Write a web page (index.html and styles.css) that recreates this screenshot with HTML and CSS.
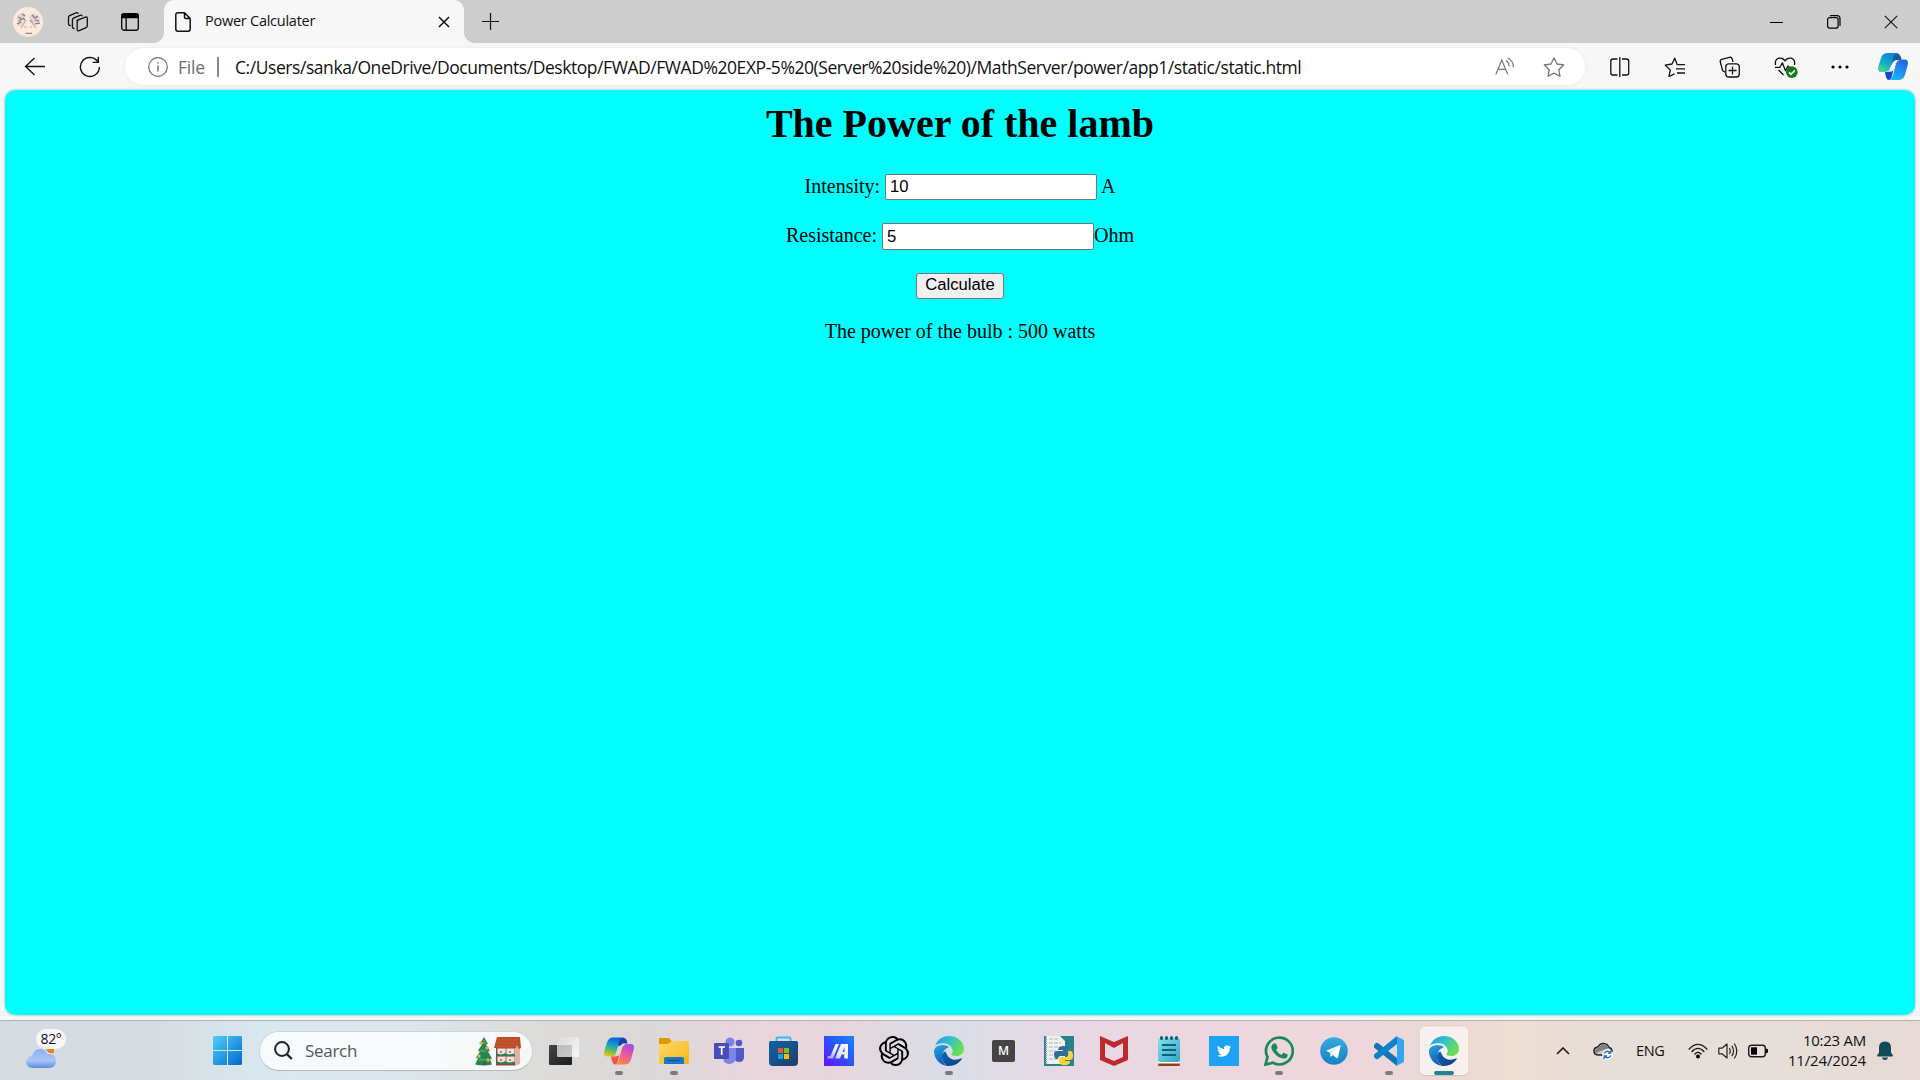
FILE: index.html
```html
<!DOCTYPE html>
<html lang="en">
<head>
<meta charset="utf-8">
<title>Power Calculater</title>
<link rel="stylesheet" href="styles.css">
</head>
<body>
<svg class="defs" width="0" height="0" aria-hidden="true">
  <defs>
    <linearGradient id="edge-low" x1="0" y1="0" x2="1" y2="1"><stop offset="0" stop-color="#1068b8"/><stop offset="1" stop-color="#0d3f86"/></linearGradient>
    <linearGradient id="edge-mid" x1="0" y1="0" x2=".4" y2="1"><stop offset="0" stop-color="#2aa6e4"/><stop offset="1" stop-color="#0c5cba"/></linearGradient>
    <linearGradient id="edge-top" x1="0" y1="0" x2="1" y2=".5"><stop offset="0" stop-color="#2496dc"/><stop offset=".5" stop-color="#2fc3cf"/><stop offset="1" stop-color="#6be04a"/></linearGradient>
    <linearGradient id="win" gradientUnits="userSpaceOnUse" x1="0" y1="0" x2="29" y2="29"><stop offset="0" stop-color="#4fd0fb"/><stop offset="1" stop-color="#0069cc"/></linearGradient>
    <linearGradient id="cp-a" x1=".5" y1="0" x2=".2" y2="1"><stop offset="0" stop-color="#0b63d2"/><stop offset=".4" stop-color="#1a9cd0"/><stop offset=".7" stop-color="#6ac24e"/><stop offset="1" stop-color="#f2c413"/></linearGradient>
    <linearGradient id="cp-b" x1=".8" y1="0" x2=".3" y2="1"><stop offset="0" stop-color="#a14bea"/><stop offset=".5" stop-color="#f0589a"/><stop offset="1" stop-color="#fb8a3c"/></linearGradient>
    <linearGradient id="bc-a" x1=".7" y1="0" x2=".2" y2="1"><stop offset="0" stop-color="#0f83cf"/><stop offset=".5" stop-color="#10a5cf"/><stop offset="1" stop-color="#4ed88a"/></linearGradient>
    <linearGradient id="bc-b" x1=".8" y1="0" x2=".3" y2="1"><stop offset="0" stop-color="#2464dc"/><stop offset="1" stop-color="#18b7fb"/></linearGradient>
    <linearGradient id="cloud" x1="0" y1="0" x2="0" y2="1"><stop offset="0" stop-color="#86aef0"/><stop offset=".6" stop-color="#a9c6f8"/><stop offset="1" stop-color="#5f8ce0"/></linearGradient>
    <linearGradient id="folder" x1="0" y1="0" x2="1" y2="1"><stop offset="0" stop-color="#ffd965"/><stop offset="1" stop-color="#f8b714"/></linearGradient>
    <linearGradient id="store" x1="0" y1="0" x2="1" y2="1"><stop offset="0" stop-color="#0b66a9"/><stop offset="1" stop-color="#253a63"/></linearGradient>
    <linearGradient id="asus" x1="1" y1="0" x2="0" y2="1"><stop offset="0" stop-color="#1785ff"/><stop offset=".5" stop-color="#2b52fa"/><stop offset="1" stop-color="#6a12f2"/></linearGradient>
    <linearGradient id="asus-mark" x1="1" y1="0" x2="0" y2="1"><stop offset="0" stop-color="#fff"/><stop offset=".6" stop-color="#dfe6ff"/><stop offset="1" stop-color="#8f8bf8"/></linearGradient>
    <linearGradient id="pad" x1="0" y1="0" x2="1" y2="1"><stop offset="0" stop-color="#84dfee"/><stop offset="1" stop-color="#35a6c5"/></linearGradient>
    <linearGradient id="tele" x1="0" y1="0" x2="0" y2="1"><stop offset="0" stop-color="#37a9df"/><stop offset="1" stop-color="#1483c2"/></linearGradient>
    <linearGradient id="dark" x1="0" y1="0" x2="1" y2="1"><stop offset="0" stop-color="#454545"/><stop offset="1" stop-color="#1c1c1c"/></linearGradient>
    <linearGradient id="glass" x1="0" y1="0" x2="1" y2="1"><stop offset="0" stop-color="#dadada"/><stop offset="1" stop-color="#f6f6f6"/></linearGradient>
    <symbol id="edge" viewBox="0 0 24 24">
      <path fill="url(#edge-low)" d="M21.86 17.86q.14 0 .25.12.1.13.1.25t-.11.33l-.32.46-.43.53-.44.5q-.26.28-.38.38l-.22.23q-.58.53-1.34 1.04-.76.51-1.6.91-.86.4-1.74.64t-1.67.24q-.9 0-1.69-.28-.8-.28-1.48-.78-.68-.5-1.22-1.17-.53-.66-.92-1.44-.38-.77-.58-1.6-.2-.83-.2-1.67 0-1 .32-1.96.33-.97.87-1.8.14.95.55 1.77.41.82 1.02 1.5.6.68 1.38 1.21.78.54 1.64.9.86.36 1.77.56.92.2 1.8.2 1.12 0 2.18-.24 1.06-.23 2.06-.72l.2-.1z"/>
      <path fill="url(#edge-low)" d="M6.3 16.600Q6.500 21 10.300 23.900Q15 24.400 18.500 22L12 18L9.100 12.400Q6.400 13 6.300 16.600z"/>
      <path fill="url(#edge-mid)" d="M6.360 16.590q0 1.100.27 2.150.27 1.060.78 2.030.51.960 1.240 1.770.74.820 1.660 1.400-1.470-.2-2.800-.74-1.330-.55-2.480-1.370-1.150-.83-2.080-1.900-.92-1.070-1.580-2.330T.360 14.940Q0 13.540 0 12.060q0-.81.320-1.490.31-.68.830-1.230.53-.55 1.200-.96.66-.4 1.350-.66.740-.27 1.500-.39.780-.12 1.550-.12.7 0 1.420.1.720.12 1.400.35.680.23 1.320.57.630.35 1.160.83-.35 0-.7.070-.33.070-.65.230-.63.280-1.200.74-.57.460-1.050 1.040-.48.580-.87 1.260-.38.670-.65 1.390-.27.710-.42 1.440-.15.720-.15 1.360z"/>
      <path fill="url(#edge-top)" d="M11.960.060q1.700 0 3.330.39 1.630.38 3.070 1.150 1.430.77 2.620 1.930 1.180 1.160 1.980 2.700.49.940.76 1.960.28 1 .28 2.080 0 .89-.23 1.700-.24.800-.69 1.480-.45.680-1.100 1.220-.64.530-1.450.88-.54.240-1.110.36-.58.130-1.160.13-.42 0-.97-.03-.54-.03-1.100-.12-.55-.1-1.050-.28-.5-.19-.84-.5-.12-.09-.23-.24-.1-.16-.1-.33 0-.15.160-.35.160-.2.350-.5.200-.28.360-.68.160-.4.160-.95 0-1.060-.4-1.960-.4-.91-1.060-1.640-.66-.74-1.520-1.280-.86-.55-1.790-.89-.84-.3-1.720-.44-.87-.14-1.760-.14-1.550 0-3.060.45T.940 7.550q.71-1.740 1.810-3.130 1.100-1.380 2.520-2.350Q6.680 1.100 8.370.580q1.700-.52 3.590-.52z"/>
    </symbol>
  </defs>
</svg>

<header class="titlebar">
  <svg class="avatar" viewBox="0 0 30 30"><circle cx="15" cy="15" r="15" fill="#fae9dd"/><path d="M4 9l6-4 3 3-4 9-4 3zM26 9l-6-3-4 4 4 8 7-1z" fill="#ddd6d6"/><path d="M5 10l4 2-3 2m3-7l3 2M4 17l4-2m2-4l2 2M19 8l3 3 3-2M22 13l4 1m-4 3l5-1M17 13l2 2" fill="none" stroke="#80797f" stroke-width="1.100"/><path d="M13 13l-5 8m9-8l6 8M11 20h3m3 0h2" stroke="#d3a488" stroke-width="1.200" fill="none"/><path d="M12.500 26.300h6.500" stroke="#6d6060" stroke-width=".9"/></svg>
  <svg class="workspaces" width="22" height="22" viewBox="0 0 22 22"><g fill="none" stroke="#111" stroke-width="1.300" stroke-linejoin="round" stroke-linecap="round"><path d="M10 9.400l8.400-3.300q1.900-.6 1.900 1.100v7.600q0 1.300-1.200 1.800l-6.900 3q-2 .7-2-1.100v-7.600q0-1 .8-1.500z"/><path d="M7 17.500q-1.600 0-1.600-1.400V8.900q0-1.200 1.100-1.700l6.500-2.900q1.500-.6 2 .4M3.200 14.500q-1.700 0-1.700-1.500V6.400q0-1.200 1.100-1.700L9 1.900q1.500-.6 2 .4"/></g></svg>
  <svg class="tabmenu" width="18" height="18" viewBox="0 0 18 18"><rect x=".7" y=".9" width="16.600" height="16.400" rx="2.600" fill="none" stroke="#111" stroke-width="1.400"/><path d="M0 5.200V3q0-3 3-3h12q3 0 3 3v2.200zM4.500 5h1.300v12H4.500z" fill="#000"/></svg>
  <div class="tab">
    <svg width="16" height="20" viewBox="0 0 16 20"><path d="M2.800.8H9.500L15.200 6.500V17q0 2.200-2.100 2.200H2.900Q.8 19.200.8 17V3Q.8.800 2.800.8zM9.500.8V5q0 1.500 1.500 1.500h4.200" fill="none" stroke="#111" stroke-width="1.500" stroke-linejoin="round"/></svg>
    <span class="tab-title">Power Calculater</span>
    <svg width="12" height="12" viewBox="0 0 12 12"><path d="M1 1l10 10M11 1L1 11" stroke="#111" stroke-width="1.500"/></svg>
  </div>
  <svg class="newtab" width="18" height="18" viewBox="0 0 18 18"><path d="M8.500 0v17M0 8.500h17" stroke="#111" stroke-width="1.200"/></svg>
  <div class="window-buttons">
    <svg width="14" height="14" viewBox="0 0 14 14"><path d="M1 7.500h13" stroke="#000"/></svg>
    <svg width="14" height="14" viewBox="0 0 14 14"><rect x=".6" y="2.600" width="10.500" height="10.500" rx="2" fill="none" stroke="#000" stroke-width="1.200"/><path d="M3 .7h7q3 0 3 3V11" fill="none" stroke="#000" stroke-width="1.200"/></svg>
    <svg width="14" height="14" viewBox="0 0 14 14"><path d="M.8.8l12.400 12.400M13.200.8L.8 13.200" stroke="#111" stroke-width="1.100"/></svg>
  </div>
</header>

<nav class="toolbar">
  <svg class="back" width="22" height="20" viewBox="0 0 22 20"><path d="M21 9.500H1.500M10.500 1L1.500 9.500 10.500 18" fill="none" stroke="#111" stroke-width="1.300"/></svg>
  <svg class="reload" width="22" height="22" viewBox="0 0 22 22"><path d="M19 6A9.500 9.500 0 1 0 20.400 11M19.300.8V6.400H13.600" fill="none" stroke="#111" stroke-width="1.400"/></svg>
  <div class="address">
    <svg width="20" height="20" viewBox="0 0 20 20"><circle cx="10" cy="10" r="9.300" fill="none" stroke="#6e6e6e" stroke-width="1.200"/><path d="M10 8.500v6M10 5v1.600" stroke="#6e6e6e" stroke-width="1.400"/></svg>
    <span class="scheme">File</span>
    <span class="rule"></span>
    <span class="url">C:/Users/sanka/OneDrive/Documents/Desktop/FWAD/FWAD%20EXP-5%20(Server%20side%20)/MathServer/power/app1/static/static.html</span>
    <svg width="20" height="20" viewBox="0 0 20 20"><g fill="none" stroke="#777" stroke-width="1.200" stroke-linecap="round"><path d="M1 17L6.800 3 12.600 17M3 12.300h7.600M11.500 3.700Q14 5.500 14 9M13 1.200Q18.500 3.500 18.300 10"/></g></svg>
    <svg width="22" height="20" viewBox="0 0 22 20"><path d="M11 1l3 6 6.700 1-4.900 4.700 1.200 6.600-6-3.200-6 3.200 1.200-6.600L1.300 8 8 7z" fill="none" stroke="#777" stroke-width="1.300" stroke-linejoin="round"/></svg>
  </div>
  <div class="tools">
    <svg width="22" height="22" viewBox="0 0 22 22"><path d="M8.500 3H4Q1.800 3 1.800 5.200v11.600Q1.800 19 4 19h4.500M13 3h4.500q2.200 0 2.200 2.200v11.600Q19.700 19 17.500 19h-4.500M10.800 1v20" fill="none" stroke="#111" stroke-width="1.300"/></svg>
    <svg width="22" height="22" viewBox="0 0 22 22"><path d="M13 8L10.700 2.200 8 8 1.300 9.200l5 4.700L5 20.500l5.500-2.700M12.500 8.700h8.500M12 12.900h9M13 17h8" fill="none" stroke="#111" stroke-width="1.300" stroke-linejoin="round"/></svg>
    <svg width="22" height="22" viewBox="0 0 22 22"><path d="M6 16.200L3.600 14.500 1.300 6Q.8 4 2.700 3.300L10.500 1.300q2-.4 2.600 1.400L14 6" fill="none" stroke="#111" stroke-width="1.300"/><rect x="6.800" y="7.800" width="13.500" height="13.200" rx="3" fill="none" stroke="#111" stroke-width="1.300"/><path d="M13.500 10.500v8M9.500 14.500h8" stroke="#111" stroke-width="1.300"/></svg>
    <svg width="24" height="22" viewBox="0 0 24 22"><path d="M1.500 9Q.5 3.500 5 2.200 9 1.400 11 5 13 1.400 17 2.200 21.500 3.500 20.500 9M1 11.300h5l2.300-4.500 3.200 8L14 10l1.500 1.500H20M4.500 14l5 5" fill="none" stroke="#111" stroke-width="1.300" stroke-linejoin="round"/><circle cx="17.800" cy="16.200" r="5.800" fill="#0f7b12"/><path d="M15 16.400l2 2 3.800-4" fill="none" stroke="#fff" stroke-width="1.700"/></svg>
    <svg width="18" height="22" viewBox="0 0 18 22"><circle cx="2" cy="11" r="1.600"/><circle cx="9" cy="11" r="1.600"/><circle cx="16" cy="11" r="1.600"/></svg>
  </div>
  <svg class="copilot" width="30" height="27" viewBox="0 0 30 27"><path d="M18 0q4.500 0 5.500 6.500L19 8l-6 4V1z" fill="#155da0"/><path d="M10 0h10q-4 .5-5 5l-2.500 9q-1.200 4.500-5 5H3q-4-.5-2.600-6L3 5q1.500-5 7-5z" fill="url(#bc-a)"/><path d="M7 19h3l6-5-2 9q-1 4-3.500 4Q8 27 7 19z" fill="#1d45cb"/><path d="M20 27H10q4-.5 5-5l2.500-10q1.200-5 5-5.500H27q4 .5 2.600 6L27 22q-1.500 5-7 5z" fill="url(#bc-b)"/><path d="M13.800 11.500q1.300-4.500 5.700-4.500h2q-3 .5-4 4.500l-1.300 4.500q-1 3-6.200 3 2-.5 2.800-4z" fill="#f7f7f7"/></svg>
</nav>

<main class="page">
  <form class="calculator">
    <h1>The Power of the lamb</h1>
    <div class="field intensity">Intensity: <input type="text" value="10"> A</div>
    <div class="field resistance">Resistance: <input type="text" value="5">Ohm</div>
    <div class="field action"><input type="button" value="Calculate"></div>
    <div class="result">The power of the bulb : 500 watts</div>
  </form>
</main>

<footer class="taskbar">
  <div class="weather">
    <svg width="32" height="24" viewBox="0 0 32 24"><path d="M18 2h10v6h-5z" fill="#f37b20"/><path d="M6 23q-6-1-6-6 .5-5 6-6Q8 4 14 4q5 0 7.500 5 8-1 8.500 7 0 6-6 7z" fill="url(#cloud)"/></svg>
    <span class="temp">82°</span>
  </div>
  <svg class="start" width="29" height="29" viewBox="0 0 29 29"><path fill="url(#win)" d="M1 0h13v14H0V1zM15 0h13l1 1v13H15zM0 15h14v14H1l-1-1zM15 15h14v13l-1 1H15z"/></svg>
  <div class="search">
    <svg width="20" height="20" viewBox="0 0 20 20"><circle cx="8" cy="8" r="6.900" fill="none" stroke="#222" stroke-width="2"/><path d="M12.800 13l5 5" stroke="#222" stroke-width="2.400"/></svg>
    <span>Search</span>
    <svg class="holiday" width="46" height="30" viewBox="0 0 46 30"><path d="M9 1l4 7-2 .5 4 6.500-2 .5 4 7-2 1 2 5q-8 2-17 0l3-6-2-1 4-6-2-1 4-6-2-1z" fill="#268553"/><path d="M9 3l2 5H7zM7 13l6 3H4zM5 22l10 2-12 1z" fill="#3eaa65"/><path d="M8 26h3v3H8z" fill="#714932"/><g fill="#f1af2e"><circle cx="6" cy="7" r="1.700"/><circle cx="12" cy="12" r="1.700"/><circle cx="4" cy="20" r="1.700"/><circle cx="13" cy="24" r="1.700"/></g><path d="M21 11h20v18.500H21z" fill="#8a4a3c"/><path d="M40 11l5-3v20l-5 1.500z" fill="#dfb3a1"/><path d="M22 1h23l1 11-2 1-2-4-1 3H19z" fill="#b94d25"/><path d="M23 4h20M22 7h20M21 10h20" stroke="#d66b3d" stroke-width=".8" stroke-dasharray="2 1"/><path d="M23 13h7v5h-7zM32 13h7v5h-7zM23 21h7v5h-7zM32 21h7v5h-7z" fill="#dfe7ef" stroke="#f7dfda" stroke-width="1.200"/><path d="M22 18q4 3 8 0 5 3 9 0M22 26q4 3 8 0 5 3 9 0" fill="none" stroke="#228955" stroke-width="1.600"/><path d="M26 15v2m9-2v2m-9 6v2m9-2v2" stroke="#c44632" stroke-width="1.400"/></svg>
  </div>
  <div class="apps">
    <span class="app"><svg width="30" height="30" viewBox="0 0 30 30"><rect y="9" width="23" height="20" rx="1" fill="url(#dark)"/><rect x="8" y="1" width="22" height="20" rx="1" fill="url(#glass)"/><path d="M8 9h15v12H8z" fill="#777" opacity=".35"/></svg></span>
    <span class="app running"><svg width="30" height="28" viewBox="0 0 30 27"><path d="M18 0q5 0 5.500 6h-5l-3 4-3-5z" fill="#173fab"/><path d="M9 0h11q-4 .5-5 5l-2.500 9q-1.200 5-5 5H3q-4-.5-2.600-6L3 5q1.500-5 6-5z" fill="url(#cp-a)"/><path d="M7 19h3l6-5-2 9q-1 4-3.500 4Q8 26 7 19z" fill="#f25345"/><path d="M20 27H10q4-.5 5-5l2.500-10q1.200-5 5-5.500H27q4 .5 2.600 6L27 22q-1.500 5-7 5z" fill="url(#cp-b)"/><path d="M13.800 11.500q1.300-4.500 5.700-4.500h2q-3 .5-4 4.500l-1.300 4.500q-1 3-6.200 3 2-.5 2.800-4z" fill="#dcdad9"/></svg></span>
    <span class="app running"><svg width="30" height="30" viewBox="0 0 30 30"><path d="M0 10V3q0-1 1-1h8q1 0 2 1l2 3v4z" fill="#dd9a05"/><path d="M0 8h9l4-3h16q1 0 1 1v22H0z" fill="url(#folder)"/><path d="M5 28v-5q0-2 2-2h16q2 0 2 2v5z" fill="#1479c9"/><path d="M9 24.500h12" stroke="#0b529a" stroke-width="1.200"/></svg></span>
    <span class="app"><svg width="30" height="30" viewBox="0 0 30 30"><circle cx="16" cy="6" r="4.600" fill="#7b83eb"/><circle cx="25" cy="7" r="3.300" fill="#5059c9"/><path d="M21 12h9v9q0 5-5 5-3 0-4-2z" fill="#5059c9"/><path d="M9 12h13v9q0 7-7 7-6 0-6-7z" fill="#7b83eb"/><rect y="7" width="15" height="16" rx="1" fill="#474eb5"/><path d="M4.500 11h6.500M7.700 11v8" stroke="#fff" stroke-width="1.700"/></svg></span>
    <span class="app"><svg width="30" height="30" viewBox="0 0 30 30"><path d="M7.500 7V2.500Q7.500 1.500 8.500 1.500h12q1 0 1 1V7" fill="none" stroke="#2ebcef" stroke-width="1.800"/><path d="M0 6.500Q0 5 1.500 5h26q1.500 0 1.500 1.500V26q0 4-4 4h-21q-4 0-4-4z" fill="url(#store)"/><path d="M9 12h5v5H9z" fill="#f35325"/><path d="M15 12h5v5h-5z" fill="#81bc06"/><path d="M9 18h5v5H9z" fill="#05a6f0"/><path d="M15 18h5v5h-5z" fill="#ffba08"/></svg></span>
    <span class="app"><svg width="30" height="30" viewBox="0 0 30 30"><path d="M0 0h30v30H0z" fill="url(#asus)"/><path d="M3 22.500l1-2.500h2.500l5-12h3.500L9 22.500zM11 22.500l6-14.500h7v14.500h-3.500v-4h-3l-1.500 4zM20.500 11l-2 5h2z" fill="url(#asus-mark)" fill-rule="evenodd"/><circle cx="22" cy="20.500" r="1.800" fill="#fff"/></svg></span>
    <span class="app"><svg width="30" height="30" viewBox="0 0 24 24"><path d="M22.282 9.821a5.985 5.985 0 0 0-.516-4.910 6.046 6.046 0 0 0-6.510-2.900A6.065 6.065 0 0 0 4.981 4.182a5.985 5.985 0 0 0-3.998 2.900 6.046 6.046 0 0 0 .743 7.097 5.980 5.980 0 0 0 .511 4.911 6.051 6.051 0 0 0 6.515 2.900A5.985 5.985 0 0 0 13.260 24a6.056 6.056 0 0 0 5.772-4.206 5.989 5.989 0 0 0 3.998-2.900 6.056 6.056 0 0 0-.748-7.073zm-9.022 12.608a4.476 4.476 0 0 1-2.876-1.041l.142-.080 4.778-2.758a.795.795 0 0 0 .393-.681v-6.737l2.020 1.169a.071.071 0 0 1 .038.052v5.583a4.504 4.504 0 0 1-4.495 4.494zm-9.661-4.125a4.471 4.471 0 0 1-.535-3.014l.142.085 4.783 2.758a.771.771 0 0 0 .781 0l5.843-3.369v2.332a.080.080 0 0 1-.033.062L9.740 19.950a4.499 4.499 0 0 1-6.141-1.646zM2.341 7.896a4.485 4.485 0 0 1 2.366-1.973V11.600a.766.766 0 0 0 .388.677l5.814 3.354-2.020 1.169a.076.076 0 0 1-.071 0l-4.830-2.787A4.504 4.504 0 0 1 2.341 7.872zm16.596 3.856L13.104 8.364 15.119 7.200a.076.076 0 0 1 .071 0l4.830 2.791a4.494 4.494 0 0 1-.676 8.104v-5.677a.790.790 0 0 0-.407-.667zm2.011-3.023l-.142-.085-4.774-2.782a.776.776 0 0 0-.785 0L9.409 9.230V6.897a.066.066 0 0 1 .028-.062l4.830-2.787a4.499 4.499 0 0 1 6.680 4.660zM8.307 12.863l-2.020-1.164a.080.080 0 0 1-.038-.057V6.074a4.499 4.499 0 0 1 7.376-3.454l-.142.081L8.704 5.459a.795.795 0 0 0-.393.681zm1.097-2.365l2.602-1.500 2.607 1.500v2.999l-2.597 1.500-2.607-1.500z"/></svg></span>
    <span class="app running"><svg width="30" height="30"><use href="#edge"/></svg></span>
    <span class="app"><span class="m-tile">M</span></span>
    <span class="app"><svg width="30" height="30" viewBox="0 0 30 30"><path d="M0 0h30v30H0z" fill="#28818f"/><path d="M2 0h14l5 5v23H2z" fill="#eff1ef"/><path d="M5 3h10M5 7h12M5 11h9M5 15h7M5 19h7M5 23h8" stroke="#a9b5b5" stroke-dasharray="4 1"/><path d="M2 1v27" stroke="#7e9696" stroke-width="2" stroke-dasharray="1 1"/><path d="M15 11q5-2 8 0 1 1 1 3v3q0 3-3 3h-4q-3 0-3 3h-2q-2-1-2-5 0-3 3-3h6v-1h-5z" fill="#336d9e"/><path d="M24 15h3q2 1 2 5t-3 4h-5v1h5v2q-4 4-10 1-1-1-1-3v-2q0-2 3-2h4q3 0 2-6z" fill="#ffd340"/></svg></span>
    <span class="app"><svg width="28" height="30" viewBox="0 0 28 30"><path d="M0 0l14 6L28 0v24l-14 6L0 24zM5 7v14l9 4 9-4V7l-9 5z" fill="#bd292c" fill-rule="evenodd"/></svg></span>
    <span class="app"><svg width="24" height="30" viewBox="0 0 24 30"><path d="M1 26h22v2q0 2-1 2H2q-1 0-1-2z" fill="#93410f"/><rect x="1" y="24" width="22" height="3.500" fill="#fff"/><rect x="1" y="2" width="22" height="24" rx="2" fill="url(#pad)"/><path d="M5 9h14M5 14h14M5 19h14" stroke="#07637f" stroke-width="1.800"/><path d="M4.500 1.500v1M9.500 1.500v1M14.500 1.500v1M19.500 1.500v1" stroke="#155f7c" stroke-width="3" stroke-linecap="round"/></svg></span>
    <span class="app"><svg width="30" height="30" viewBox="0 0 30 30"><path d="M0 0h30v30H0z" fill="#1da1f2"/><path transform="translate(8 8) scale(.59)" fill="#fff" d="M23.953 4.570a10 10 0 01-2.825.775 4.958 4.958 0 002.163-2.723c-.951.555-2.005.959-3.127 1.184a4.920 4.920 0 00-8.384 4.482C7.690 8.095 4.067 6.130 1.640 3.162a4.822 4.822 0 00-.666 2.475c0 1.710.870 3.213 2.188 4.096a4.904 4.904 0 01-2.228-.616v.060a4.923 4.923 0 003.946 4.827 4.996 4.996 0 01-2.212.085 4.936 4.936 0 004.604 3.417 9.867 9.867 0 01-6.102 2.105c-.390 0-.779-.023-1.170-.067a13.995 13.995 0 007.557 2.209c9.053 0 13.998-7.496 13.998-13.985 0-.210 0-.420-.015-.630A9.935 9.935 0 0024 4.590z"/></svg></span>
    <span class="app running"><svg width="30" height="30" viewBox="0 0 30 30"><path d="M1.500 28.500l2-7.300A13.400 13.400 0 1 1 9 26.800z" fill="none" stroke="#188a5a" stroke-width="2.700"/><path d="M9.600 7.500h1.700q.7 0 1 .8l1.200 3q.2.600-.2 1.100l-1.200 1.500q2 3.700 5.500 5l1.600-1.800q.4-.5 1-.2l3 1.400q.7.400.5 1.100-.7 3.200-4.200 3.200-4.700-.5-8.300-4.300-3.800-3.900-3.900-7 .2-2.800 2.300-3.800z" fill="#188a5a"/></svg></span>
    <span class="app"><svg width="28" height="28" viewBox="0 0 28 28"><circle cx="14" cy="14" r="13.800" fill="url(#tele)"/><path d="M6 13.700L19.700 8.300q1-.3.800 1L18 20.500q-.4 1.200-1.500.5l-3.800-3-2 2-.9-4.500z" fill="#fff"/><path d="M10 15.500l7.500-5.200-6 6.300-.8 3.400z" fill="#c5deed"/></svg></span>
    <span class="app running"><svg width="30" height="30" viewBox="0 0 30 30"><path d="M0 9l2-2q1-.7 2 0l19 15v8L0 11.500z" fill="#1273b8"/><path d="M0 21l2 2q1 .7 2 0L23 8V0L0 18.500z" fill="#0e83cc"/><path d="M22 0l7 3.400q1 .5 1 1.600v20q0 1-1 1.600L22 30q1-.7 1-2V2q0-1.300-1-2z" fill="#33a5f2"/></svg></span>
    <span class="app running active"><svg width="30" height="30"><use href="#edge"/></svg></span>
  </div>
  <div class="tray">
    <svg class="chevron" width="14" height="8" viewBox="0 0 14 8"><path d="M1 7l6-6 6 6" fill="none" stroke="#1b1b1b" stroke-width="1.600"/></svg>
    <svg class="onedrive" width="20" height="18" viewBox="0 0 20 18"><path d="M5 13q-4-.2-4-4t4-4q2-4 6-3.500 3.500.3 5 4Q19 6 19 9.500L15 13z" fill="#ccc" stroke="#222" stroke-width="1.500"/><path d="M2 9q1-4 4-3.500Q8 1.500 11.500 2q3 .5 4 4L8 9q-3 0-5 3z" fill="#828282"/><circle cx="14.500" cy="12.500" r="5.300" fill="#fff"/><path d="M11 11.500q1.500-3 5-2l1.500 1.700m.3-3v3h-3M18 13.500q-1.500 3-5 2L11.500 14m-.3 3v-3h3" fill="none" stroke="#1b6fc0" stroke-width="1.300"/></svg>
    <span class="lang">ENG</span>
    <svg class="wifi" width="20" height="16" viewBox="0 0 20 16"><g fill="none" stroke="#1b1b1b" stroke-width="1.300"><path d="M.7 6.500Q10-3.700 19.300 6.500M3.700 9Q10 1.900 16.300 9M6.500 11.500Q10 7 13.500 11.500"/></g><circle cx="10" cy="13.500" r="2"/></svg>
    <svg class="sound" width="20" height="18" viewBox="0 0 20 18"><g fill="none" stroke="#222" stroke-width="1.200" stroke-linejoin="round"><path d="M.8 6.200H4L9 2v14L4 11.800H.8z"/><path d="M11.300 6q2 3 0 6M13.800 3.800q3.500 5.200 0 10.400M16.300 1.500q5 7.500 0 15"/></g></svg>
    <svg class="battery" width="20" height="14" viewBox="0 0 20 14"><rect x=".7" y="1.200" width="16.600" height="11.600" rx="2.700" fill="none" stroke="#1b1b1b" stroke-width="1.400"/><path d="M3 3.300h6v7.400H3z"/><path d="M18 4.500l2 1v3l-2 1z"/></svg>
    <div class="clock"><span>10:23 AM</span><span class="date">11/24/2024</span></div>
    <svg class="bell" width="16" height="20" viewBox="0 0 16 20"><path d="M8 .5Q2 .5 2 6.500v5L0 14.500q0 1 1 1h14q1 0 1-1l-2-3v-5Q14 .5 8 .5zM5 16.500h6q-.5 2.500-3 2.500t-3-2.500z" fill="#12495a"/></svg>
  </div>
</footer>
</body>
</html>
```
FILE: styles.css
```css
* { box-sizing: border-box; }
body {
  margin: 0;
  width: 1920px;
  height: 1080px;
  overflow: hidden;
  display: flex;
  flex-direction: column;
  background: #f7f7f7;
  font-family: "Open Sans", "Noto Sans", sans-serif;
  color: #111;
}
svg { display: block; flex: none; }
.defs { position: absolute; }

/* title bar */
.titlebar { height: 43px; flex: none; display: flex; align-items: center; background: #cdcdcd; padding-left: 13px; }
.avatar { width: 30px; height: 30px; }
.workspaces { margin-left: 24px; }
.tabmenu { margin-left: 32px; }
.tab {
  position: relative;
  width: 300px; height: 43px;
  margin-left: 25px;
  padding: 0 14px 0 11px;
  display: flex; align-items: center;
  background: #f7f7f7;
  border-radius: 10px 10px 0 0;
}
.tab::before, .tab::after { content: ""; position: absolute; bottom: 0; width: 10px; height: 10px; }
.tab::before { left: -10px; background: radial-gradient(circle at 0 0, #cdcdcd 9.500px, #f7f7f7 10px); }
.tab::after { right: -10px; background: radial-gradient(circle at 100% 0, #cdcdcd 9.500px, #f7f7f7 10px); }
.tab-title { margin-left: 14px; flex: 1; font-size: 14.500px; letter-spacing: -.25px; padding-bottom: 2px; white-space: nowrap; }
.newtab { margin-left: 18px; }
.window-buttons { margin-left: auto; padding-right: 22px; display: flex; gap: 43.500px; }

/* toolbar */
.toolbar { height: 47px; flex: none; display: flex; align-items: center; padding-left: 24px; }
.reload { margin-left: 33px; }
.address {
  width: 1460px; height: 37px;
  margin-left: 24px;
  padding: 0 20px 0 23px;
  display: flex; align-items: center;
  background: #fff;
  border-radius: 19px;
  box-shadow: 0 0 4px rgba(0, 0, 0, .06);
}
.scheme { margin-left: 10px; width: 39px; font-size: 17.500px; letter-spacing: -.2px; color: #6e6e6e; }
.rule { width: 2px; height: 20px; background: #888; }
.url { margin-left: 16px; flex: 1; font-size: 17.500px; letter-spacing: -.438px; white-space: nowrap; }
.address svg:last-child { margin-left: 28px; }
.tools { margin-left: 24px; display: flex; align-items: center; gap: 33px; }
.copilot { margin-left: 29px; }

/* page */
.page {
  height: 925px; flex: none;
  margin: 0 5px;
  background: #0ff;
  border-radius: 10px;
  box-shadow: 0 0 3px rgba(0, 0, 0, .3);
  font-family: "Liberation Serif", "Times New Roman", serif;
  font-size: 20px;
  text-align: center;
  color: #000;
}
.calculator { padding-top: 10px; }
h1 { margin: 0 0 27px; font-size: 40px; line-height: 47px; }
.field { height: 27px; display: flex; justify-content: center; align-items: flex-start; line-height: 25px; white-space: pre; }
.field input[type="text"] {
  width: 212px; height: 27px;
  margin: 0; padding: 1px 4px;
  border: 1px solid #767676; border-radius: 2px;
  font: 16.670px "Liberation Sans", Arial, sans-serif;
}
.intensity input[type="text"] { height: 26px; padding-bottom: 2px; }
.resistance { margin-top: 22px; }
.action { margin-top: 23px; }
.action input {
  width: 88px; height: 26px;
  padding: 0 0 2px;
  border: 1px solid #767676; border-radius: 3px;
  background: #efefef;
  font: 16.670px "Liberation Sans", Arial, sans-serif;
  color: #000;
}
.result { margin-top: 20px; line-height: 23px; }

/* taskbar */
.taskbar {
  height: 60px; flex: none;
  margin-top: 5px;
  border-top: 1px solid #b2b2b2;
  display: flex; align-items: center;
  background: linear-gradient(90deg, #d6dae1 0, #d6dbe1 150px, #d9e8ef 270px, #dbe6ec 400px, #dcdbd9 540px, #dbd8d8 650px, #e9d5db 760px, #e5d6dc 840px, #d9dde6 950px, #e8d7e4 1090px, #ebd6dd 1200px, #eed6dc 1330px, #ead8d7 1420px, #efddd0 1510px, #e5ded9 1620px, #e6ded9 1780px, #e7d9d5 1920px);
}
.weather { position: relative; width: 213px; padding: 12px 0 0 26px; }
.temp {
  position: absolute; left: 36px; top: -4px;
  width: 30px; height: 20px;
  border-radius: 10px;
  background: rgba(250, 250, 250, .92);
  font-size: 14px; line-height: 20px; text-align: center; letter-spacing: -.3px;
}
.search {
  width: 274px; height: 40px;
  margin-left: 17px;
  padding: 0 11px 0 14px;
  display: flex; align-items: center;
  background: rgba(255, 255, 255, .78);
  border: 1px solid #d0d3d5; border-bottom-color: #b8bbbd;
  border-radius: 20px;
  font-size: 17px; letter-spacing: -.3px; color: #555;
}
.search span { margin-left: 11px; }
.holiday { margin-left: auto; }
.apps { display: flex; margin-left: 3px; }
.app { position: relative; width: 55px; height: 48px; display: flex; align-items: center; justify-content: center; }
.running::after { content: ""; position: absolute; bottom: 0; width: 8px; height: 4px; border-radius: 2px; background: #7e7a7c; }
.active::before { content: ""; position: absolute; inset: 0 3px 0 4px; background: rgba(255, 255, 255, .6); border: 1px solid rgba(255, 255, 255, .4); border-radius: 5px; box-shadow: 0 1px 1px rgba(0, 0, 0, .12); }
.active svg { position: relative; }
.active::after { width: 20px; background: #23828f; }
.m-tile { width: 23px; height: 22px; border-radius: 2px; background: #444; color: #fff; font-size: 12px; font-weight: 600; line-height: 22px; text-align: center; }
.tray { display: flex; align-items: center; margin-left: auto; padding-right: 27px; }
.onedrive { margin-left: 23px; }
.lang { margin-left: 23px; width: 30px; font-size: 14.500px; letter-spacing: -.4px; }
.wifi { margin-left: 22px; }
.sound { margin-left: 10px; }
.battery { margin-left: 10px; }
.clock { width: 98px; padding-bottom: 2px; display: flex; flex-direction: column; align-items: flex-end; font-size: 15px; line-height: 20px; letter-spacing: -.25px; white-space: nowrap; }
.date { letter-spacing: -.15px; }
.bell { margin-left: 11px; }
```
